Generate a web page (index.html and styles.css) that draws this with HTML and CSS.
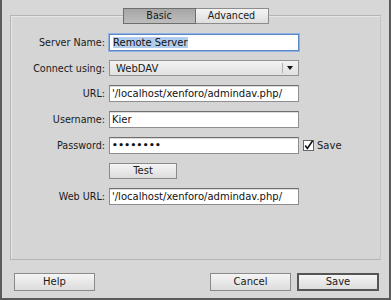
FILE: index.html
```html
<!DOCTYPE html>
<html lang="en">
<head>
    <meta charset="UTF-8">
    <title>Site Setup - Remote Server</title>
    <link rel="stylesheet" href="styles.css">
</head>

<body>
<div class="dialog">
    <div class="group">
        <div class="tabs">
            <div class="tab selected">Basic</div>
            <div class="tab">Advanced</div>
        </div>

        <div class="row first">
            <div class="label">Server Name:</div>
            <div class="field focused"><span class="sel">Remote Server</span></div>
        </div>
        <div class="row">
            <div class="label">Connect using:</div>
            <div class="select">
                <span class="select-text">WebDAV</span>
                <span class="select-arrow"></span>
            </div>
        </div>
        <div class="row">
            <div class="label">URL:</div>
            <div class="field">'/localhost/xenforo/admindav.php/</div>
        </div>
        <div class="row">
            <div class="label">Username:</div>
            <div class="field">Kier</div>
        </div>
        <div class="row">
            <div class="label">Password:</div>
            <div class="field dots">&#8226;&#8226;&#8226;&#8226;&#8226;&#8226;&#8226;&#8226;</div>
            <div class="check">
                <svg width="11" height="11" viewBox="0 0 11 11">
                    <rect x="0.5" y="0.5" width="10" height="10" fill="#fff" stroke="#666"/>
                    <path d="M2.2 5.6 L4.4 8.4 L9.6 0.8" fill="none" stroke="#111" stroke-width="1.6"/>
                </svg>
                <span>Save</span>
            </div>
        </div>
        <div class="row">
            <div class="label"></div>
            <div class="button test">Test</div>
        </div>
        <div class="row">
            <div class="label">Web URL:</div>
            <div class="field">'/localhost/xenforo/admindav.php/</div>
        </div>
    </div>

    <div class="footer">
        <div class="button wide">Help</div>
        <div class="spacer"></div>
        <div class="button wide">Cancel</div>
        <div class="button wide default">Save</div>
    </div>
</div>
</body>
</html>
```

FILE: styles.css
```css
html, body {
    margin: 0;
    padding: 0;
}

body {
    background: #d7d7d7;
    font-family: "DejaVu Sans", sans-serif;
    font-size: 9.6px;
    color: #1a1a1a;
    width: 391px;
    height: 300px;
    overflow: hidden;
}

.dialog {
    box-sizing: border-box;
    height: 300px;
    border-left: 2px solid #5a5a5a;
    border-right: 2px solid #5a5a5a;
    border-bottom: 2px solid #5a5a5a;
    padding: 15px 8px 0 8px;
}

.group {
    box-sizing: border-box;
    height: 245px;
    border: 1px solid #b4b4b4;
    border-right-color: #c4c4c4;
    box-shadow: inset 1px 1px 0 #e6e6e6;
    background: #d5d5d5;
}

.tabs {
    display: flex;
    justify-content: center;
    margin-top: -8px;
}

.tab {
    box-sizing: border-box;
    width: 73px;
    height: 16px;
    line-height: 14px;
    text-align: center;
    border: 1px solid #8c8c8c;
    background: linear-gradient(#f4f4f4, #dedede);
}

.tab + .tab {
    border-left: none;
}

.tab.selected {
    background: linear-gradient(#a6a6a6, #bdbdbd);
    border-color: #6e6e6e;
}

.row {
    display: flex;
    align-items: center;
    margin-top: 9px;
}

.row.first {
    margin-top: 10px;
}

.label {
    width: 94px;
    padding-right: 4px;
    text-align: right;
    flex-shrink: 0;
}

.field {
    box-sizing: border-box;
    width: 190px;
    height: 17px;
    line-height: 15px;
    padding-left: 2px;
    background: #fff;
    border: 1px solid #8e8e8e;
    border-top-color: #6f6f6f;
    box-shadow: inset 0 1px 0 #dcdcdc;
    white-space: nowrap;
    overflow: hidden;
    color: #111;
    font-size: 10px;
}

.field.focused {
    border-color: #5b87c4;
    box-shadow: 0 0 0 1px #8fb3e3;
    padding-left: 3px;
}

.sel {
    background: #b1cdee;
}

.field.dots {
    font-size: 9px;
    letter-spacing: 0.4px;
    font-weight: bold;
}

.select {
    box-sizing: border-box;
    width: 190px;
    height: 16px;
    display: flex;
    align-items: center;
    border: 1px solid #939393;
    background: linear-gradient(#f3f3f3, #e1e1e1);
    font-size: 10px;
}

.select-text {
    flex: 1;
    padding-left: 6px;
}

.select-arrow {
    width: 15px;
    height: 10px;
    border-left: 1px solid #b0b0b0;
    position: relative;
}

.select-arrow::after {
    content: "";
    position: absolute;
    left: 4px;
    top: 3px;
    border-left: 3px solid transparent;
    border-right: 3px solid transparent;
    border-top: 4px solid #111;
}

.check {
    display: flex;
    align-items: center;
    margin-left: 4px;
    gap: 3px;
    font-size: 10px;
}

.check svg {
    display: block;
}

.button {
    box-sizing: border-box;
    height: 16px;
    line-height: 14px;
    text-align: center;
    border: 1px solid #8a8a8a;
    background: linear-gradient(#f5f5f5, #dcdcdc);
    font-size: 10px;
}

.button.test {
    width: 68px;
}

.footer {
    display: flex;
    margin-top: 13px;
    padding: 0 2px 0 4px;
}

.spacer {
    flex: 1;
}

.button.wide {
    width: 81px;
    height: 18px;
    line-height: 16px;
    margin-left: 6px;
}

.button.wide:first-child {
    margin-left: 0;
}

.button.default {
    width: 82px;
    border: 2px solid #555;
    line-height: 14px;
}
```
